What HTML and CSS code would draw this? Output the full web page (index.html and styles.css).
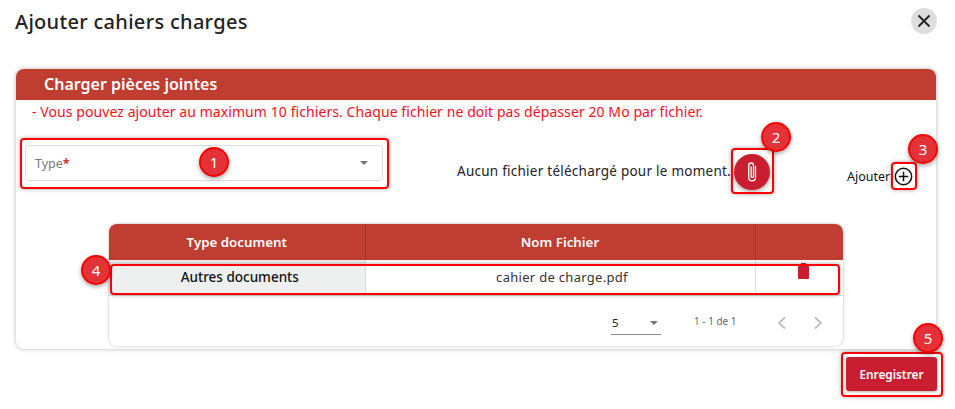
FILE: index.html
```html
<!DOCTYPE html>
<html lang="fr">
<head>
    <meta charset="UTF-8">
    <title>Ajouter cahiers charges</title>
    <link rel="stylesheet" href="styles.css">
</head>
<body>
    <div class="dialog">
        <div class="dialog-head">
            <h1>Ajouter cahiers charges</h1>
            <button class="close-btn" aria-label="Fermer">
                <svg width="14" height="14" viewBox="0 0 14 14"><path d="M1.5 1.5l11 11M12.5 1.5l-11 11" stroke="#222" stroke-width="1.8" fill="none"/></svg>
            </button>
        </div>

        <div class="card">
            <div class="card-title">Charger pièces jointes</div>
            <p class="warning">- Vous pouvez ajouter au maximum 10 fichiers. Chaque fichier ne doit pas dépasser 20 Mo par fichier.</p>

            <div class="upload-row">
                <div class="type-select">
                    <span class="type-label">Type<span class="star">*</span></span>
                    <span class="caret"></span>
                </div>
                <span class="no-file">Aucun fichier téléchargé pour le moment.</span>
                <button class="clip-btn" aria-label="Joindre">
                    <svg width="14" height="22" viewBox="0 0 14 22"><path d="M10.5 5.5v11a3.4 3.4 0 0 1-6.8 0V4.4a2.4 2.4 0 0 1 4.8 0v10.8a1.2 1.2 0 0 1-2.4 0V6" stroke="#fff" stroke-width="1.3" fill="none" stroke-linecap="round"/></svg>
                </button>
                <div class="add-box">
                    <span>Ajouter</span>
                    <svg width="19" height="19" viewBox="0 0 20 20"><circle cx="10" cy="10" r="8.6" stroke="#111" stroke-width="1.6" fill="none"/><path d="M10 5v10M5 10h10" stroke="#111" stroke-width="1.6"/></svg>
                </div>
            </div>

            <div class="table-wrap">
                <table class="doc-table">
                    <thead>
                        <tr>
                            <th class="col-type">Type document</th>
                            <th class="col-name">Nom Fichier</th>
                            <th class="col-action"></th>
                        </tr>
                    </thead>
                    <tbody>
                        <tr>
                            <td class="cell-type">Autres documents</td>
                            <td class="cell-name">cahier de charge.pdf</td>
                            <td class="cell-action">
                                <svg width="11" height="16" viewBox="0 0 11 16"><path d="M3 0h5v2h3v13a1 1 0 0 1-1 1H1a1 1 0 0 1-1-1V2h3z" fill="#c81e30"/></svg>
                            </td>
                        </tr>
                    </tbody>
                </table>
                <div class="pager">
                    <div class="page-size"><span>5</span><span class="caret"></span></div>
                    <span class="page-range">1 - 1 de 1</span>
                    <div class="page-arrows">
                        <svg width="12" height="14" viewBox="0 0 12 14"><path d="M9 1.500L3 7l6 5.500" stroke="#bdbdbd" stroke-width="1.800" fill="none"/></svg>
                        <svg width="12" height="14" viewBox="0 0 12 14"><path d="M3 1.500L9 7l-6 5.500" stroke="#bdbdbd" stroke-width="1.800" fill="none"/></svg>
                    </div>
                </div>
            </div>
        </div>

        <div class="dialog-foot">
            <button class="save-btn">Enregistrer</button>
        </div>
    </div>

    <!-- repères rouges par-dessus la capture -->
    <div class="mark mark-1"></div>
    <div class="mark mark-2"></div>
    <div class="mark mark-3"></div>
    <div class="mark mark-4"></div>
    <div class="mark mark-5"></div>
    <div class="badge badge-1">1</div>
    <div class="badge badge-2">2</div>
    <div class="badge badge-3">3</div>
    <div class="badge badge-4">4</div>
    <div class="badge badge-5">5</div>
</body>
</html>
```

FILE: styles.css
```css
* {
    margin: 0;
    padding: 0;
    box-sizing: border-box;
}
html, body {
    height: 409px;
    overflow: hidden;
}
body {
    position: relative;
    background: #fff;
    font-family: "Noto Sans", "Liberation Sans", sans-serif;
    color: #222;
}
button {
    border: none;
    font-family: inherit;
}
.dialog {
    padding: 8px 18px 0 15px;
}
.dialog-head {
    display: flex;
    justify-content: space-between;
    align-items: flex-start;
    height: 61px;
}
h1 {
    font-size: 20px;
    font-weight: 500;
    line-height: 28px;
    letter-spacing: 0.3px;
}
.close-btn {
    width: 26px;
    height: 26px;
    border-radius: 50%;
    background: #ddd;
    display: flex;
    align-items: center;
    justify-content: center;
}
.card {
    height: 280px;
    margin-left: 1px;
    margin-right: 1px;
    border-radius: 8px;
    background: #fff;
    box-shadow: 0 0 4px rgba(0,0,0,0.3);
    overflow: hidden;
}
.card-title {
    height: 31px;
    padding-left: 28px;
    background: #bf3d31;
    color: #fff;
    font-size: 16px;
    font-weight: 600;
    line-height: 30px;
}
.warning {
    padding-left: 16px;
    margin-top: 2px;
    font-size: 14px;
    line-height: 20px;
    color: #f5101f;
    letter-spacing: 0.08px;
}
.upload-row {
    display: flex;
    align-items: center;
    height: 52px;
    margin-top: 15px;
    padding-left: 9px;
}
.type-select {
    width: 358px;
    height: 36px;
    display: flex;
    align-items: center;
    justify-content: space-between;
    padding: 0 14px 0 9px;
    border: 1px solid #ddd;
    border-radius: 4px;
}
.type-label {
    font-size: 12.5px;
    color: #777;
}
.star {
    color: #d32f2f;
    font-weight: 700;
}
.caret {
    width: 0;
    height: 0;
    border-left: 4px solid transparent;
    border-right: 4px solid transparent;
    border-top: 4px solid #757575;
}
.no-file {
    margin: 16px 0 0 74px;
    font-size: 13.5px;
    letter-spacing: 0.25px;
    white-space: nowrap;
}
.clip-btn {
    width: 36px;
    height: 36px;
    margin: 18px 0 0 3px;
    border-radius: 50%;
    background: #c81e30;
    box-shadow: 0 2px 4px rgba(0,0,0,0.35);
    display: flex;
    align-items: center;
    justify-content: center;
}
.add-box {
    display: flex;
    align-items: center;
    gap: 4px;
    margin: 26px 0 0 77px;
    font-size: 12.5px;
    color: #111;
}
.table-wrap {
    width: 734px;
    height: 122px;
    margin: 35px 0 0 93px;
    border-radius: 8px;
    box-shadow: 0 0 3px rgba(0,0,0,0.3);
    overflow: hidden;
}
.doc-table {
    width: 100%;
    border-collapse: collapse;
    table-layout: fixed;
}
.doc-table th {
    height: 36px;
    background: #bf3d31;
    color: #fff;
    font-size: 13.3px;
    font-weight: 600;
    border-right: 1px solid #a83428;
}
.doc-table th:last-child {
    border-right: none;
}
.col-type {
    width: 256px;
}
.col-name {
    width: 390px;
}
.doc-table td {
    height: 35px;
    text-align: center;
    font-size: 13.5px;
    border-right: 1px solid #ddd;
    border-bottom: 1px solid #ddd;
}
.doc-table td:last-child {
    border-right: none;
}
.cell-type {
    padding-left: 6px;
    background: #eef0f0;
    color: #111;
    font-weight: 500;
}
.doc-table .cell-name {
    padding-left: 4px;
    font-size: 13px;
    color: #333;
    letter-spacing: 0.3px;
}
.cell-action {
    padding-left: 9px;
}
.cell-action svg {
    display: block;
    margin: -12px auto 0;
}
.pager {
    display: flex;
    align-items: center;
    height: 51px;
    padding-left: 502px;
}
.page-size {
    width: 50px;
    height: 24px;
    display: flex;
    align-items: center;
    justify-content: space-between;
    padding: 0 3px 0 1px;
    border-bottom: 1px solid #888;
    font-size: 11.5px;
    margin-top: 4px;
}
.page-range {
    margin-left: 33px;
    font-size: 10px;
    color: #666;
    white-space: nowrap;
}
.page-arrows {
    display: flex;
    gap: 24px;
    margin-left: 39px;
    margin-top: 3px;
}
.dialog-foot {
    display: flex;
    justify-content: flex-end;
    margin-top: 8px;
}
.save-btn {
    width: 91px;
    height: 34px;
    border-radius: 3px;
    background: #c81e30;
    color: #fff;
    font-size: 11.8px;
    font-weight: 600;
    box-shadow: 0 1px 3px rgba(0,0,0,0.3);
}
.mark {
    position: absolute;
    border: 2px solid #f00;
    border-radius: 4px;
    box-shadow: 0 0 4px rgba(0,0,0,0.35);
}
.mark-1 { left: 20px; top: 138px; width: 369px; height: 51px; }
.mark-2 { left: 731px; top: 148px; width: 43px; height: 46px; }
.mark-3 { left: 891px; top: 162px; width: 26px; height: 28px; }
.mark-4 { left: 110px; top: 264px; width: 730px; height: 31px; }
.mark-5 { left: 841px; top: 352px; width: 102px; height: 45px; }
.badge {
    position: absolute;
    width: 30px;
    height: 30px;
    border: 2px solid #f00;
    border-radius: 50%;
    background: #e53238;
    color: #fff;
    font-size: 15px;
    line-height: 26px;
    text-align: center;
    box-shadow: 0 2px 4px rgba(0,0,0,0.35);
}
.badge-1 { left: 199px; top: 147px; }
.badge-2 { left: 761px; top: 122px; }
.badge-3 { left: 908px; top: 134px; }
.badge-4 { left: 81px; top: 255px; }
.badge-5 { left: 913px; top: 323px; }
```
